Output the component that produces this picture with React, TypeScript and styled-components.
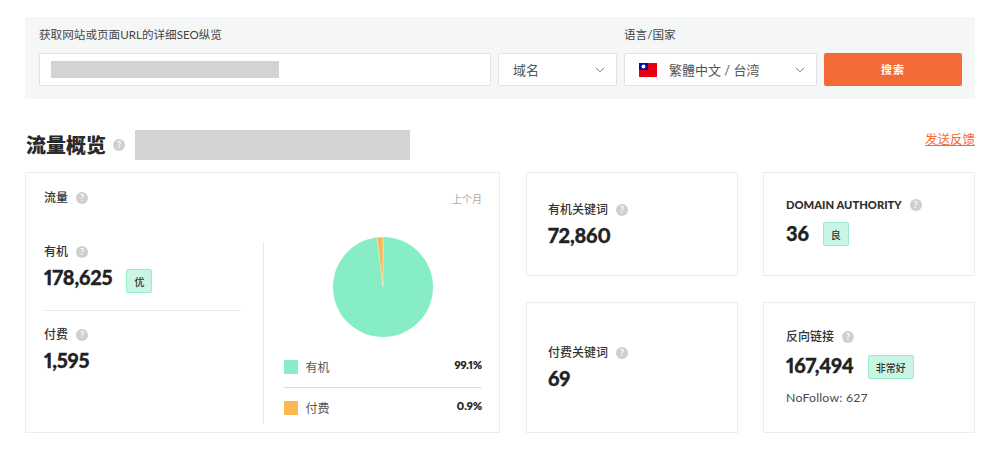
import React from 'react'
import styled, { createGlobalStyle } from 'styled-components'

const GlobalStyle = createGlobalStyle`
  html, body {
    margin: 0;
    padding: 0;
    background: #fff;
    font-family: Lato, "Noto Sans CJK SC", sans-serif;
    color: #333;
  }
`

const Page = styled.div`
  width: 950px;
  padding: 17px 25px 0;
`

const SearchPanel = styled.section`
  height: 82px;
  box-sizing: border-box;
  background: #f5f7f7;
  padding: 11px 14px 0;
  display: grid;
  grid-template-columns: 452px 119px 193px 138px;
  column-gap: 7px;
  grid-template-rows: 14px 33px;
  row-gap: 11px;
`

const FieldLabel = styled.label<{ $col: number }>`
  grid-column: ${props => props.$col};
  grid-row: 1;
  font-size: 11.6px;
  line-height: 14px;
  color: #444;
`

const UrlInput = styled.div`
  grid-row: 2;
  grid-column: 1;
  background: #fff;
  border: 1px solid #dfe3e3;
  border-radius: 2px;
  display: flex;
  align-items: center;
  padding-left: 11px;
`

const Redacted = styled.div<{ $w: number; $h: number }>`
  width: ${props => props.$w}px;
  height: ${props => props.$h}px;
  background: #d3d3d3;
`

const SelectBox = styled.div<{ $col: number }>`
  grid-row: 2;
  grid-column: ${props => props.$col};
  background: #fff;
  border: 1px solid #dfe3e3;
  border-radius: 2px;
  display: flex;
  align-items: center;
  font-size: 13px;
  color: #555;
  padding: 0 11px 0 14px;
`

const SelectText = styled.span`
  flex: 1;
`

const FlagWrap = styled.span`
  display: flex;
  margin-right: 12px;
`

const SearchButton = styled.button`
  grid-row: 2;
  grid-column: 4;
  border: none;
  border-radius: 2px;
  background: #f26a36;
  color: #fff;
  font-family: inherit;
  font-size: 11px;
  font-weight: 700;
  letter-spacing: 1px;
  padding: 0 0 2px;
`

const TitleRow = styled.div`
  margin-top: 31px;
  height: 30px;
  display: flex;
  align-items: center;
`

const Title = styled.h1`
  margin: 0 6px 0 1px;
  font-size: 20px;
  line-height: 30px;
  font-weight: 900;
  color: #2a2a2a;
`

const TitleRedacted = styled(Redacted)`
  margin-left: 10px;
`

const FeedbackLink = styled.a`
  margin-left: auto;
  font-size: 12.5px;
  color: #f26a36;
  text-decoration: underline;
  margin-top: -13px;
`

const Dashboard = styled.div`
  margin-top: 12px;
  display: grid;
  grid-template-columns: 475px 213px 212px;
  grid-template-rows: 104px 131px;
  row-gap: 26px;
  column-gap: 25px;
`

const Card = styled.div`
  box-sizing: border-box;
  border: 1px solid #eceeee;
  background: #fff;
`

const TrafficCard = styled(Card)`
  grid-row: 1 / span 2;
  padding: 17px 17px 0 18px;
`

const KeywordCard = styled(Card)<{ $top: number }>`
  margin-left: 1px;
  padding: ${props => props.$top}px 0 0 21px;
`

const AuthorityCard = styled(Card)<{ $top: number }>`
  padding: ${props => props.$top}px 0 0 22px;
`

const HeaderRow = styled.div`
  display: flex;
  align-items: center;
  height: 16px;
`

const PeriodNote = styled.span`
  margin-left: auto;
  font-size: 10px;
  color: #a8a8a8;
`

const TrafficBody = styled.div`
  display: flex;
  align-items: flex-start;
  margin-top: 31px;
`

const TrafficStats = styled.div`
  box-sizing: border-box;
  width: 220px;
  height: 181px;
  margin-top: 5px;
  padding-top: 2px;
  border-right: 1px solid #e6e8e8;
  padding-right: 22px;
`

const StatBlock = styled.div`
  height: 60px;
  & + & {
    border-top: 1px solid #e6e8e8;
    margin-top: 6px;
    padding-top: 16px;
  }
`

const Label = styled.div`
  display: flex;
  align-items: center;
  font-size: 12px;
  line-height: 16px;
  font-weight: 500;
  color: #333;
`

const UpperLabel = styled(Label)`
  font-size: 11.2px;
  font-weight: 900;
  color: #2c2c2c;
`

const HelpDot = styled.span<{ $gap?: number }>`
  width: 12px;
  height: 12px;
  margin-left: ${props => props.$gap || 8}px;
  border-radius: 50%;
  background: #cfcfcf;
  color: #fff;
  font-size: 9px;
  font-weight: 700;
  line-height: 12px;
  text-align: center;
  flex: none;
`

const ValueRow = styled.div<{ $top: number }>`
  display: flex;
  align-items: flex-start;
  margin-top: ${props => props.$top}px;
  gap: 14px;
`

const Value = styled.div`
  font-size: 20px;
  line-height: 24px;
  font-weight: 900;
  font-variant-numeric: proportional-nums;
  letter-spacing: -0.2px;
  -webkit-text-stroke: 0.3px #222;
  color: #222;
`

const Grade = styled.span<{ $drop: number }>`
  box-sizing: border-box;
  height: 24px;
  padding: 0 7px;
  margin-top: ${props => props.$drop}px;
  display: flex;
  align-items: center;
  background: #c9f5e4;
  border: 1px solid #97ecca;
  border-radius: 2px;
  font-size: 10px;
  font-weight: 500;
  color: #333;
`

const NoFollow = styled.div`
  margin-top: 11px;
  font-size: 12.3px;
  line-height: 15px;
  color: #4a4a4a;
  letter-spacing: 0.2px;
`

const TrafficShare = styled.div`
  width: 199px;
  margin-left: 20px;
`

const PieWrap = styled.div`
  display: flex;
  justify-content: center;
  margin-bottom: 10px;
`

const LegendRow = styled.div`
  display: flex;
  align-items: center;
  height: 40px;
  font-size: 12px;
  color: #555;
  & + & {
    border-top: 1px solid #dcdfdf;
  }
`

const Swatch = styled.span<{ $color: string }>`
  width: 14px;
  height: 14px;
  margin-right: 8px;
  background: ${props => props.$color};
`

const LegendName = styled.span`
  margin-top: -2px;
`

const Percent = styled.span`
  margin-left: auto;
  margin-top: -6px;
  font-size: 11px;
  font-weight: 900;
  font-variant-numeric: proportional-nums;
  -webkit-text-stroke: 0.2px #222;
  color: #222;
`

function Help({ gap }: { gap?: number }) {
  return <HelpDot $gap={gap}>?</HelpDot>
}

function Chevron() {
  return (
    <svg width="10" height="6" viewBox="0 0 10 6" fill="none" stroke="#777" strokeWidth="1">
      <path d="M1 .8 5 4.8 9 .8" />
    </svg>
  )
}

function TaiwanFlag() {
  return (
    <svg width="18" height="14" viewBox="0 0 18 14">
      <rect width="18" height="14" fill="#e8000f" />
      <rect width="9" height="7" fill="#000f9c" />
      <circle cx="4.5" cy="3.5" r="2" fill="#fff" />
    </svg>
  )
}

function TrafficPie() {
  return (
    <svg width="100" height="100" viewBox="0 0 100 100">
      <circle cx="50" cy="50" r="50" fill="#86edc4" />
      <path d="M50 50 50 0A50 50 0 0 0 44 .4Z" fill="#f8b84e" stroke="#fff" strokeWidth=".5" />
    </svg>
  )
}

export default function App() {
  return (
    <Page>
      <GlobalStyle />
      <SearchPanel>
        <FieldLabel $col={1}>获取网站或页面URL的详细SEO纵览</FieldLabel>
        <FieldLabel $col={3}>语言/国家</FieldLabel>
        <UrlInput>
          <Redacted $w={228} $h={17} />
        </UrlInput>
        <SelectBox $col={2}>
          <SelectText>域名</SelectText>
          <Chevron />
        </SelectBox>
        <SelectBox $col={3}>
          <FlagWrap>
            <TaiwanFlag />
          </FlagWrap>
          <SelectText>繁體中文 / 台湾</SelectText>
          <Chevron />
        </SelectBox>
        <SearchButton>搜索</SearchButton>
      </SearchPanel>

      <TitleRow>
        <Title>流量概览</Title>
        <Help gap={1} />
        <TitleRedacted $w={275} $h={30} />
        <FeedbackLink>发送反馈</FeedbackLink>
      </TitleRow>

      <Dashboard>
        <TrafficCard>
          <HeaderRow>
            <Label>流量<Help /></Label>
            <PeriodNote>上个月</PeriodNote>
          </HeaderRow>
          <TrafficBody>
            <TrafficStats>
              <StatBlock>
                <Label>有机<Help /></Label>
                <ValueRow $top={5}>
                  <Value>178,625</Value>
                  <Grade $drop={4}>优</Grade>
                </ValueRow>
              </StatBlock>
              <StatBlock>
                <Label>付费<Help /></Label>
                <ValueRow $top={5}>
                  <Value>1,595</Value>
                </ValueRow>
              </StatBlock>
            </TrafficStats>
            <TrafficShare>
              <PieWrap>
                <TrafficPie />
              </PieWrap>
              <LegendRow>
                <Swatch $color="#86edc4" />
                <LegendName>有机</LegendName>
                <Percent>99.1%</Percent>
              </LegendRow>
              <LegendRow>
                <Swatch $color="#f8b84e" />
                <LegendName>付费</LegendName>
                <Percent>0.9%</Percent>
              </LegendRow>
            </TrafficShare>
          </TrafficBody>
        </TrafficCard>

        <KeywordCard $top={29}>
          <Label>有机关键词<Help /></Label>
          <ValueRow $top={5}>
            <Value>72,860</Value>
          </ValueRow>
        </KeywordCard>
        <AuthorityCard $top={24}>
          <UpperLabel>DOMAIN AUTHORITY<Help /></UpperLabel>
          <ValueRow $top={8}>
            <Value>36</Value>
            <Grade $drop={1}>良</Grade>
          </ValueRow>
        </AuthorityCard>
        <KeywordCard $top={42}>
          <Label>付费关键词<Help /></Label>
          <ValueRow $top={5}>
            <Value>69</Value>
          </ValueRow>
        </KeywordCard>
        <AuthorityCard $top={26}>
          <Label>反向链接<Help /></Label>
          <ValueRow $top={8}>
            <Value>167,494</Value>
            <Grade $drop={2}>非常好</Grade>
          </ValueRow>
          <NoFollow>NoFollow: 627</NoFollow>
        </AuthorityCard>
      </Dashboard>
    </Page>
  )
}
